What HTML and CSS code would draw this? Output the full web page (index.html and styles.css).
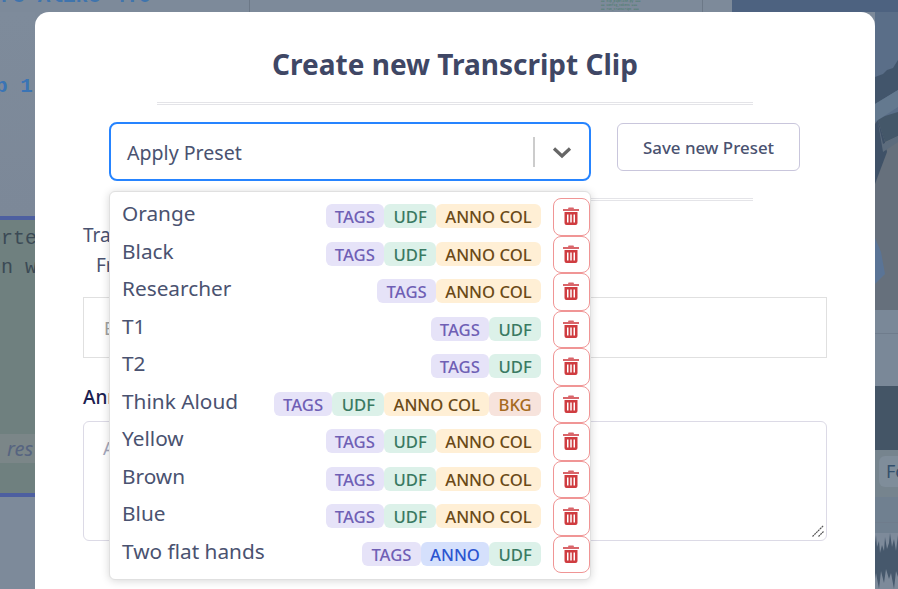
FILE: index.html
```html
<!DOCTYPE html>
<html lang="en">
<head>
  <meta charset="UTF-8" />
  <title>Create new Transcript Clip</title>
  <link rel="stylesheet" href="styles.css">
</head>
<body>
  <!-- dimmed page behind the modal -->
  <div class="page">
    <div class="page-top">
      <div class="top-text">re Alike 4.0</div>
      <div class="top-tiny">
        <span>== nlp_pipeline.py ===</span>
        <span>== config_tokens ===</span>
        <span>== run_transcript ===</span>
      </div>
      <div class="top-photo"></div>
    </div>
    <div class="page-main">
      <div class="left-col">
        <div class="left-a"><span class="step">p 1</span></div>
        <div class="left-b">
          <div class="code">orte<br>en w</div>
          <div class="quote">res</div>
        </div>
        <div class="left-c"></div>
      </div>
      <div class="right-col">
        <svg class="photo" width="23" height="298" viewBox="0 0 23 298">
          <rect width="23" height="298" fill="#66707c"/>
          <rect width="23" height="110" fill="#5a6e88"/>
          <path d="M0 65 L8 62 L12 58 L18 56 L23 48 V78 L0 92Z" fill="#42556b"/>
          <path d="M0 92 L23 78 V95 L0 110Z" fill="#64798f"/>
          <path d="M3 108 L10 104 L23 100 V124 L10 130 Z" fill="#445769"/>
          <path d="M0 112 L3 108 L10 130 L12 140 L0 172Z" fill="#3f5167"/>
          <path d="M3 110 L8 132 L23 124 V130 L8 140Z" fill="#5d6c7d"/>
          <path d="M0 226 L6 240 L10 262 L0 272Z" fill="#5a7496"/>
        </svg>
        <div class="strip"></div>
        <div class="dark-band"></div>
        <div class="chip-band"><span class="chip">Fo</span></div>
        <div class="strip short"></div>
        <svg class="wave" width="23" height="56" viewBox="0 0 23 56">
          <path d="M0 10 L1 2 L2 14 L4 8 L5 20 L7 12 L9 18 L10 4 L12 16 L14 10 L15 0 L17 14 L19 6 L21 18 L23 2 V44 L21 38 L19 56 L16 40 L14 46 L11 36 L9 50 L6 38 L4 56 L1 40 L0 46Z" fill="#46586c"/>
        </svg>
      </div>
    </div>
  </div>

  <div class="modal">
    <h2 class="modal-title">Create new Transcript Clip</h2>
    <hr class="rule">

    <div class="preset-row">
      <div class="preset-select">
        <div class="select-box">
          <span class="select-value">Apply Preset</span>
          <span class="select-sep"></span>
          <svg class="chevron" width="20" height="20" viewBox="0 0 20 20"><path d="M2 6.5 L10 14 L18 6.5" fill="none" stroke="#666" stroke-width="3.2"/></svg>
        </div>

        <div class="menu">
          <div class="menu-row">
            <span class="preset-name">Orange</span>
            <span class="tags"><span class="tag tag-tags">TAGS</span><span class="tag tag-udf">UDF</span><span class="tag tag-col">ANNO COL</span></span>
            <button class="trash"><svg width="16" height="18" viewBox="0 0 16 18"><use href="#trash-icon"/></svg></button>
          </div>
          <div class="menu-row">
            <span class="preset-name">Black</span>
            <span class="tags"><span class="tag tag-tags">TAGS</span><span class="tag tag-udf">UDF</span><span class="tag tag-col">ANNO COL</span></span>
            <button class="trash"><svg width="16" height="18" viewBox="0 0 16 18"><use href="#trash-icon"/></svg></button>
          </div>
          <div class="menu-row">
            <span class="preset-name">Researcher</span>
            <span class="tags"><span class="tag tag-tags">TAGS</span><span class="tag tag-col">ANNO COL</span></span>
            <button class="trash"><svg width="16" height="18" viewBox="0 0 16 18"><use href="#trash-icon"/></svg></button>
          </div>
          <div class="menu-row">
            <span class="preset-name">T1</span>
            <span class="tags"><span class="tag tag-tags">TAGS</span><span class="tag tag-udf">UDF</span></span>
            <button class="trash"><svg width="16" height="18" viewBox="0 0 16 18"><use href="#trash-icon"/></svg></button>
          </div>
          <div class="menu-row">
            <span class="preset-name">T2</span>
            <span class="tags"><span class="tag tag-tags">TAGS</span><span class="tag tag-udf">UDF</span></span>
            <button class="trash"><svg width="16" height="18" viewBox="0 0 16 18"><use href="#trash-icon"/></svg></button>
          </div>
          <div class="menu-row">
            <span class="preset-name">Think Aloud</span>
            <span class="tags"><span class="tag tag-tags">TAGS</span><span class="tag tag-udf">UDF</span><span class="tag tag-col">ANNO COL</span><span class="tag tag-bkg">BKG</span></span>
            <button class="trash"><svg width="16" height="18" viewBox="0 0 16 18"><use href="#trash-icon"/></svg></button>
          </div>
          <div class="menu-row">
            <span class="preset-name">Yellow</span>
            <span class="tags"><span class="tag tag-tags">TAGS</span><span class="tag tag-udf">UDF</span><span class="tag tag-col">ANNO COL</span></span>
            <button class="trash"><svg width="16" height="18" viewBox="0 0 16 18"><use href="#trash-icon"/></svg></button>
          </div>
          <div class="menu-row">
            <span class="preset-name">Brown</span>
            <span class="tags"><span class="tag tag-tags">TAGS</span><span class="tag tag-udf">UDF</span><span class="tag tag-col">ANNO COL</span></span>
            <button class="trash"><svg width="16" height="18" viewBox="0 0 16 18"><use href="#trash-icon"/></svg></button>
          </div>
          <div class="menu-row">
            <span class="preset-name">Blue</span>
            <span class="tags"><span class="tag tag-tags">TAGS</span><span class="tag tag-udf">UDF</span><span class="tag tag-col">ANNO COL</span></span>
            <button class="trash"><svg width="16" height="18" viewBox="0 0 16 18"><use href="#trash-icon"/></svg></button>
          </div>
          <div class="menu-row">
            <span class="preset-name">Two flat hands</span>
            <span class="tags"><span class="tag tag-tags">TAGS</span><span class="tag tag-anno">ANNO</span><span class="tag tag-udf">UDF</span></span>
            <button class="trash"><svg width="16" height="18" viewBox="0 0 16 18"><use href="#trash-icon"/></svg></button>
          </div>
        </div>
      </div>
      <button class="save-btn">Save new Preset</button>
    </div>
    <hr class="rule rule-low">

    <div class="transcript-info">
      <div>Transcript</div>
      <div class="from-line">From</div>
    </div>
    <input class="clip-input" type="text" placeholder="Enter clip title">

    <label class="anno-label">Annotation</label>
    <div class="anno-wrap">
      <textarea class="anno-text" placeholder="Add annotation"></textarea>
      <svg class="grip" width="12" height="12" viewBox="0 0 12 12">
        <path d="M0.5 11.5 L11.5 0.5 M6.5 11.5 L11.5 6.5" fill="none" stroke="#555" stroke-width="1.2" stroke-dasharray="2 0.6"/>
      </svg>
    </div>
  </div>

  <svg class="icon-defs" width="0" height="0">
    <symbol id="trash-icon" viewBox="0 0 16 18">
      <path d="M5.5 0.5 H10.5 L11 2 H16 V4 H0 V2 H5Z" fill="#d9656a"/>
      <path fill-rule="evenodd" d="M1.5 5 H14.5 V16 Q14.5 18 12.5 18 H3.5 Q1.5 18 1.5 16Z M4 7.5 V15.5 H5.5 V7.5Z M7.25 7.5 V15.5 H8.75 V7.5Z M10.5 7.5 V15.5 H12 V7.5Z" fill="#cf3c40"/>
    </symbol>
  </svg>
</body>
</html>
```

FILE: styles.css
```css
html, body {
  margin: 0;
  height: 100%;
  overflow: hidden;
}
body {
  font-family: "Noto Sans", sans-serif;
  background: #7d8a9a;
  color: #4a5270;
}

/* page behind */
.page {
  height: 589px;
  display: flex;
  flex-direction: column;
}
.page-top {
  height: 12px;
  flex: none;
  display: flex;
  overflow: hidden;
  background: #7d8a9a;
}
.top-text {
  width: 250px;
  flex: none;
  box-sizing: border-box;
  height: 40px;
  margin-top: -18px;
  padding-top: 3px;
  border-right: 1px solid #6c7887;
  font: 600 21px/24px "Liberation Mono", monospace;
  color: #3f74ad;
  white-space: nowrap;
}
.top-tiny {
  width: 453px;
  flex: none;
  box-sizing: border-box;
  padding-left: 351px;
  border-right: 1px solid #6c7887;
  font: 3px/4px "Liberation Mono", monospace;
  color: #3e7a62;
  white-space: nowrap;
  overflow: hidden;
  display: flex;
  flex-direction: column;
  margin-right: 29px;
}
.top-photo {
  flex: 1;
  background: #4d6280;
}
.page-main {
  flex: 1;
  display: flex;
  justify-content: space-between;
}
.left-col {
  width: 35px;
  display: flex;
  flex-direction: column;
  overflow: hidden;
}
.left-a {
  height: 204px;
  flex: none;
  background: linear-gradient(#7e8b9b, #7c8898);
  border-bottom: 4px solid #4d5fa0;
}
.step {
  display: block;
  margin-left: -5px;
  padding-top: 63px;
  font: 600 21px/24px "Liberation Mono", monospace;
  color: #3a74b5;
  white-space: nowrap;
}
.left-b {
  height: 273px;
  flex: none;
  background: #6f807f;
}
.code {
  padding-top: 4px;
  margin-left: -11px;
  font: 20px/29px "Liberation Mono", monospace;
  color: #3b4a55;
  white-space: nowrap;
}
.quote {
  margin-top: 152px;
  height: 29px;
  padding-left: 7px;
  background: #7b8688;
  font: italic 20px/29px "Noto Sans", sans-serif;
  color: #566480;
  overflow: hidden;
}
.left-c {
  flex: 1;
  border-top: 4px solid #4d5fa0;
  background: #7d8a9a;
}
.right-col {
  width: 23px;
  display: flex;
  flex-direction: column;
}
.photo, .wave {
  display: block;
  flex: none;
}
.photo {
  filter: blur(0.7px);
}
.strip {
  height: 76px;
  flex: none;
  background: #7a8898;
  background-image: linear-gradient(#6f7c8c, #6f7c8c);
  background-size: 100% 1px;
  background-position: 0 23px;
  background-repeat: no-repeat;
}
.dark-band {
  height: 64px;
  flex: none;
  background: #445566;
}
.chip-band {
  height: 47px;
  flex: none;
  padding: 6px 0 0 4px;
  box-sizing: border-box;
  background: #76848e;
  overflow: hidden;
}
.chip {
  display: block;
  height: 31px;
  padding-left: 7px;
  background: #7f8d9a;
  border-radius: 6px 0 0 6px;
  font-size: 18px;
  line-height: 31px;
  color: #33506c;
}
.strip.short {
  height: 36px;
  background-color: #708090;
  background-position: 0 25px;
}
.wave {
  background: #7d8a9a;
}

/* modal */
.modal {
  position: absolute;
  left: 35px;
  top: 12px;
  width: 840px;
  height: 577px;
  box-sizing: border-box;
  padding: 0 48px;
  background: #fff;
  border-radius: 14px 14px 0 0;
}
.modal-title {
  margin: 0;
  padding-top: 33px;
  text-align: center;
  font-size: 28px;
  line-height: 38px;
  font-weight: 700;
  color: #3f4765;
}
.rule {
  width: 596px;
  height: 0;
  margin: 19px auto 0;
  border: 0;
  border-top: 1px solid #e4e4e8;
  border-bottom: 1px solid #e4e4e8;
  padding-top: 1px;
}
.rule-low {
  margin-top: 0;
}

.preset-row {
  display: flex;
  align-items: flex-start;
  gap: 26px;
  margin: 17px 0 0 26px;
  height: 76px;
}
.preset-select {
  width: 482px;
  position: relative;
  flex: none;
}
.select-box {
  height: 59px;
  box-sizing: border-box;
  display: flex;
  align-items: center;
  padding: 0 17px 0 16px;
  border: 2px solid #2684ff;
  border-radius: 8px;
  background: #fff;
}
.select-value {
  flex: 1;
  font-size: 19.6px;
  line-height: 29px;
  padding-top: 2px;
  color: #4a5270;
}
.select-sep {
  width: 2px;
  height: 30px;
  background: #cccccc;
  margin-right: 17px;
}
.chevron {
  display: block;
  margin-top: 1px;
}
.save-btn {
  width: 183px;
  height: 48px;
  margin-top: 1px;
  padding: 1px 0 0;
  background: #fff;
  border: 1px solid #c9c6dc;
  border-radius: 6px;
  font-family: inherit;
  font-size: 16.9px;
  font-weight: 500;
  color: #4a5270;
}

/* dropdown */
.menu {
  position: absolute;
  top: 69px;
  left: 0;
  width: 482px;
  box-sizing: border-box;
  padding: 6px 0;
  background: #fff;
  border: 1px solid #e0e0e0;
  border-radius: 6px;
  box-shadow: 0 1px 8px rgba(0, 0, 0, 0.16);
  z-index: 5;
}
.menu-row {
  height: 37.5px;
  display: flex;
  align-items: flex-start;
  padding-left: 12px;
}
.preset-name {
  flex: 1;
  font-size: 20.8px;
  line-height: 31px;
  color: #4a5270;
}
.tags {
  display: flex;
  margin-top: 6px;
  margin-right: 12px;
}
.tag {
  height: 24px;
  padding: 0 9.25px;
  border-radius: 6px;
  font-size: 16.7px;
  line-height: 25px;
  font-weight: 500;
}
.tag-tags { background: #e6e3f8; color: #6f5fb5; }
.tag-udf { background: #dcf1e9; color: #3a7a62; }
.tag-col { background: #ffefd5; color: #6b4a17; }
.tag-bkg { background: #f7e3dc; color: #a66a20; }
.tag-anno { background: #d5e0fc; color: #2b55d0; }
.trash {
  width: 37px;
  height: 37.5px;
  flex: none;
  padding: 0 1px 1px 0;
  display: flex;
  align-items: center;
  justify-content: center;
  background: #fff;
  border: 1px solid #f09595;
  border-radius: 8px;
}
.trash svg {
  display: block;
}
.icon-defs {
  position: absolute;
}

/* form behind the dropdown */
.transcript-info {
  margin-top: 19px;
  font-size: 19px;
  line-height: 30px;
}
.from-line {
  padding-left: 13px;
}
.clip-input {
  display: block;
  width: 100%;
  height: 61px;
  margin-top: 17px;
  box-sizing: border-box;
  padding: 0 20px;
  border: 1px solid #e0e0e0;
  font-family: inherit;
  font-size: 18px;
  outline: none;
}
.clip-input::placeholder {
  color: #a0a0a0;
}
.anno-label {
  display: block;
  margin-top: 26px;
  font-size: 19px;
  line-height: 26px;
  font-weight: 500;
  color: #1a2050;
}
.anno-wrap {
  position: relative;
  margin-top: 11px;
}
.anno-text {
  display: block;
  width: 100%;
  height: 120px;
  box-sizing: border-box;
  padding: 14px 19px;
  border: 1px solid #dcdae6;
  border-radius: 6px;
  font-family: inherit;
  font-size: 18px;
  outline: none;
  resize: none;
}
.anno-text::placeholder {
  color: #a3a6bb;
}
.grip {
  position: absolute;
  right: 3px;
  bottom: 4px;
}
```
